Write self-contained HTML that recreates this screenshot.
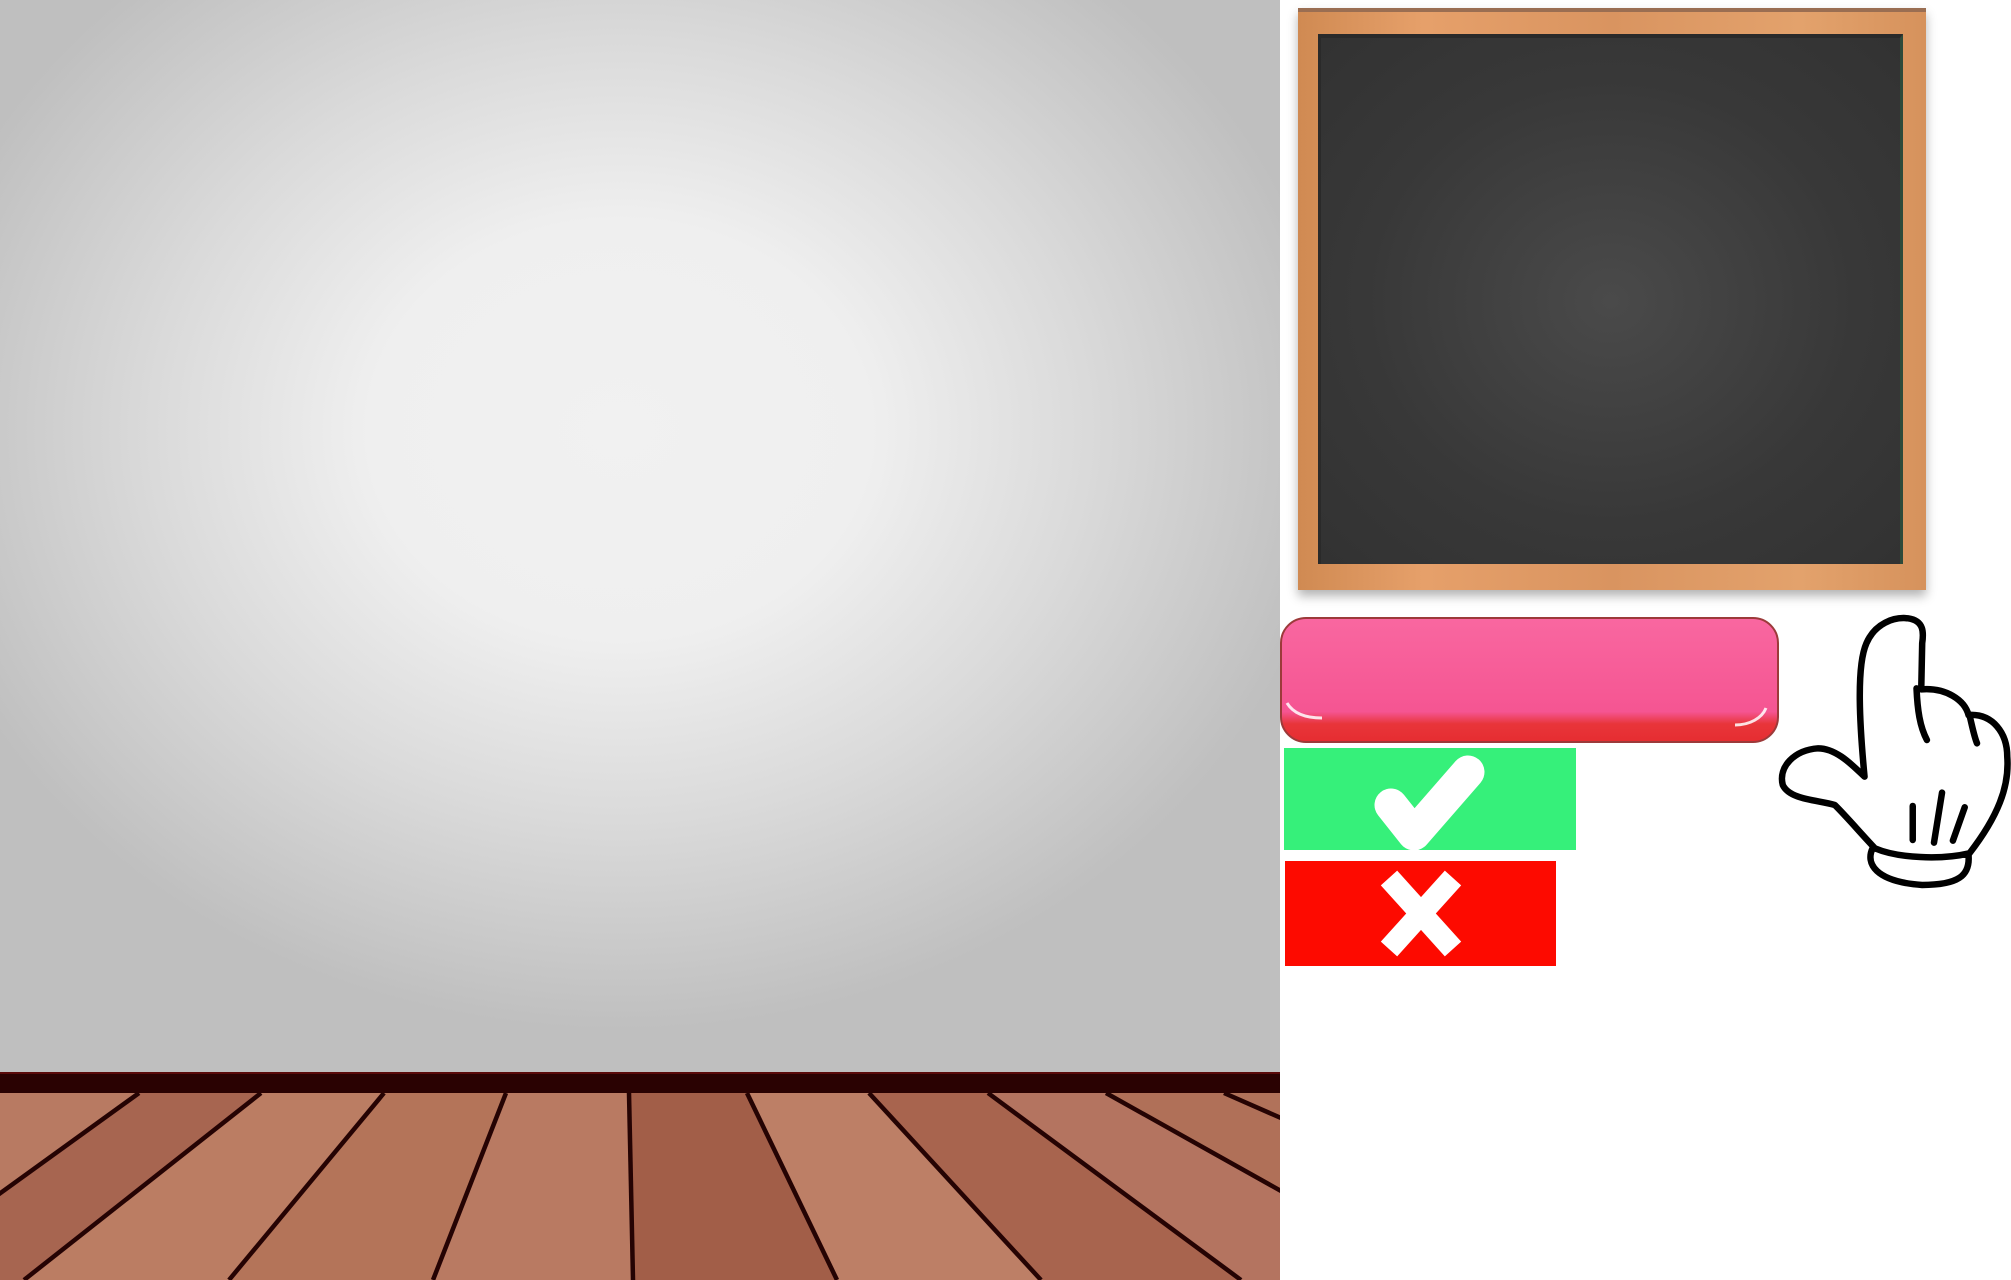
<!DOCTYPE html>
<html><head><meta charset="utf-8"><style>
html,body{margin:0;padding:0;width:2011px;height:1280px;overflow:hidden;background:#fff}
.wall{position:absolute;left:0;top:0;width:1280px;height:1073px;background:radial-gradient(ellipse 720px 600px at 620px 430px,#f1f1f1 0%,#efefef 35%,#dadada 65%,#bfbfbf 100%)}
.base{position:absolute;left:0;top:1072px;width:1280px;height:21px;background:#2a0202;border-top:2px solid #5a0a0a;box-sizing:border-box}
.floor{position:absolute;left:0;top:1093px;width:1280px;height:187px;background:#b1725a}
.frame{position:absolute;left:1298px;top:8px;width:628px;height:582px;background:linear-gradient(90deg,#d08a52,#e6a06a 20%,#d99460 50%,#e3a26c 80%,#d6925c);box-shadow:0 6px 10px rgba(0,0,0,.3);border-top:4px solid #9a6e52;box-sizing:border-box}
.board{position:absolute;left:1318px;top:34px;width:585px;height:530px;background:radial-gradient(ellipse at 50% 50%,#4a4a4a,#383838 60%,#323232);border-top:4px solid #2a2a2a;border-left:3px solid #2a2a2a;border-right:3px solid #2d4a3a;box-sizing:border-box}
.pink{position:absolute;left:1280px;top:617px;width:499px;height:126px;border-radius:26px;background:linear-gradient(180deg,#f967a0 0%,#f55592 76%,#e8353a 86%,#e62d31 100%);border:2px solid #9c3a3a;box-sizing:border-box}
.green{position:absolute;left:1284px;top:748px;width:292px;height:102px;background:#36f07a}
.red{position:absolute;left:1285px;top:861px;width:271px;height:105px;background:#fd0a00}
</style></head><body>
<div class="wall"></div>
<div class="base"></div>
<div class="floor"></div>
<svg style="position:absolute;left:0;top:1093px" width="1280" height="187">
<g stroke="none">
<polygon points="0,0 139,0 -120,187 0,187" fill="#b87a62"/>
<polygon points="139,0 261,0 24,187 -120,187" fill="#a76550"/>
<polygon points="261,0 384,0 229,187 24,187" fill="#bb7d63"/>
<polygon points="384,0 506,0 433,187 229,187" fill="#b47459"/>
<polygon points="506,0 629,0 633,187 433,187" fill="#b97a62"/>
<polygon points="629,0 747,0 837,187 633,187" fill="#a25e48"/>
<polygon points="747,0 869,0 1041,187 837,187" fill="#bd7f66"/>
<polygon points="869,0 988,0 1241,187 1041,187" fill="#a8644e"/>
<polygon points="988,0 1106,0 1440,187 1241,187" fill="#b47460"/>
<polygon points="1106,0 1224,0 1650,187 1440,187" fill="#b07058"/>
</g>
<g stroke="#250303" stroke-width="4.5" fill="none">
<line x1="139" y1="0" x2="-120" y2="187"/>
<line x1="261" y1="0" x2="24" y2="187"/>
<line x1="384" y1="0" x2="229" y2="187"/>
<line x1="506" y1="0" x2="433" y2="187"/>
<line x1="629" y1="0" x2="633" y2="187"/>
<line x1="747" y1="0" x2="837" y2="187"/>
<line x1="869" y1="0" x2="1041" y2="187"/>
<line x1="988" y1="0" x2="1241" y2="187"/>
<line x1="1106" y1="0" x2="1440" y2="187"/>
<line x1="1224" y1="0" x2="1650" y2="187"/>
</g>
</svg>
<div class="frame"></div>
<div class="board"></div>
<div class="pink"></div>
<div class="green"></div>
<div class="red"></div>
<svg style="position:absolute;left:0;top:0" width="2011" height="1280" viewBox="0 0 2011 1280">
<path d="M1287,703 C1293,713 1305,718 1322,718 M1735,725 C1750,725 1762,718 1766,708" stroke="#fff" stroke-width="3" fill="none" opacity=".85"/>
<path d="M1391,805 L1414,834 L1468,772" stroke="#fff" stroke-width="33" stroke-linecap="round" stroke-linejoin="round" fill="none"/>
<path d="M1389,878 L1453,949 M1453,878 L1389,949" stroke="#fff" stroke-width="22" fill="none"/>
<g transform="translate(1270,600) scale(0.4726,0.3333)">
<g stroke="#000" fill="#fff" stroke-linecap="round" stroke-linejoin="round">
<path vector-effect="non-scaling-stroke" stroke-width="6.5" d="M1275,745 C1260,790 1280,845 1380,855 C1455,855 1482,828 1478,765 Z"/>
<path vector-effect="non-scaling-stroke" stroke-width="6.5" d="M1258,530 C1248,380 1240,200 1262,130 C1280,70 1320,50 1350,55 C1385,62 1383,100 1380,130 L1378,268 C1430,262 1470,300 1478,345 C1530,340 1560,400 1560,470 C1565,560 1540,650 1480,760 C1420,780 1330,775 1280,745 C1250,700 1220,650 1195,615 C1160,600 1100,600 1085,555 C1075,500 1110,450 1160,445 C1200,445 1235,500 1258,530 Z"/>
<path vector-effect="non-scaling-stroke" stroke-width="6.5" d="M1368,265 C1370,330 1375,380 1390,420 M1480,345 C1486,380 1490,410 1496,430 M1360,618 L1360,720 M1422,578 L1405,728 M1470,622 L1445,722" fill="none"/>
</g>
</g>
</svg>
</body></html>
